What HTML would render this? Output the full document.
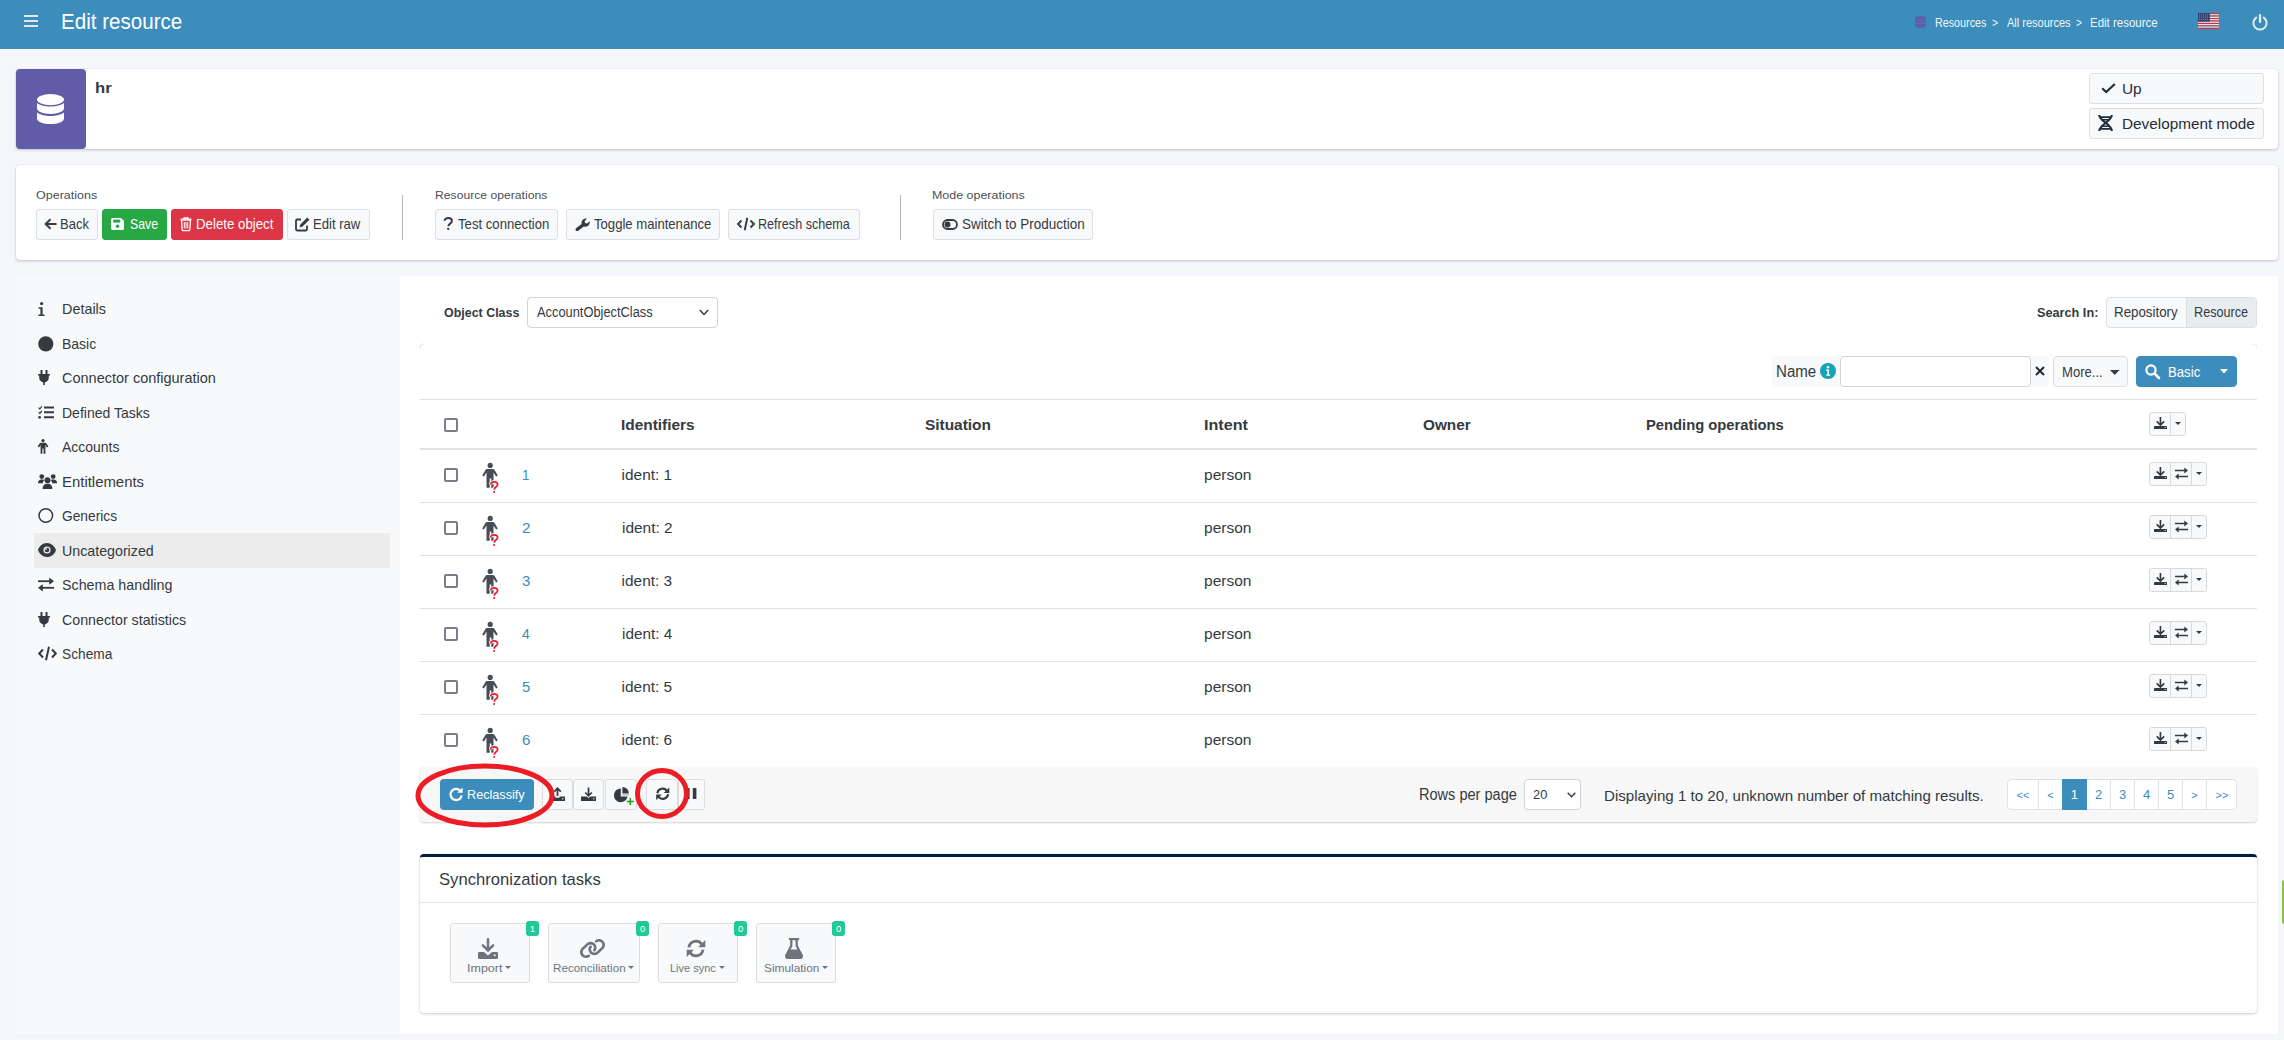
<!DOCTYPE html><html><head><meta charset="utf-8"><title>Edit resource</title><style>
*{box-sizing:border-box}
html,body{margin:0;padding:0}
body{width:2284px;height:1040px;overflow:hidden;position:relative;background:#f4f6f9;font-family:"Liberation Sans",sans-serif}
.t{position:absolute;white-space:nowrap}
.r{position:absolute}
svg.r{overflow:visible}
</style></head><body>
<div class="r" style="left:0px;top:0px;width:2284px;height:49px;background:#3c8dbc"></div>
<div class="r" style="left:24px;top:15px;width:14px;height:2px;background:#dfe9ef"></div>
<div class="r" style="left:24px;top:20px;width:14px;height:2px;background:#dfe9ef"></div>
<div class="r" style="left:24px;top:25px;width:14px;height:2px;background:#dfe9ef"></div>
<div class="t" style="left:61.32px;top:5px;font-size:21.5px;line-height:35px;color:#ffffff;transform:scaleX(0.9573);transform-origin:0 0;">Edit resource</div>
<svg class="r" style="left:1915px;top:16px;" width="11" height="12" viewBox="0 0 11 12" preserveAspectRatio="none"><ellipse cx="5.5" cy="2" rx="5.5" ry="2" fill="#605ca8"/><path d="M0 3.2v2.2c0 1.1 2.5 2 5.5 2s5.5-.9 5.5-2V3.2c-1.2.8-3.2 1.2-5.5 1.2S1.2 4 0 3.2z" fill="#605ca8"/><path d="M0 6.9v2.9c0 1.2 2.5 2.2 5.5 2.2s5.5-1 5.5-2.2V6.9c-1.2.8-3.2 1.2-5.5 1.2S1.2 7.7 0 6.9z" fill="#605ca8"/></svg>
<div class="t" style="left:1935.20px;top:12px;font-size:12.8px;line-height:21px;color:#f2f6f9;transform:scaleX(0.8403);transform-origin:0 0;">Resources</div>
<div class="t" style="left:1991.54px;top:12px;font-size:12.8px;line-height:21px;color:#f2f6f9;transform:scaleX(0.8000);transform-origin:0 0;">&gt;</div>
<div class="t" style="left:2007.04px;top:12px;font-size:12.8px;line-height:21px;color:#f2f6f9;transform:scaleX(0.8601);transform-origin:0 0;">All resources</div>
<div class="t" style="left:2075.54px;top:12px;font-size:12.8px;line-height:21px;color:#f2f6f9;transform:scaleX(0.8000);transform-origin:0 0;">&gt;</div>
<div class="t" style="left:2090.15px;top:12px;font-size:12.8px;line-height:21px;color:#f2f6f9;transform:scaleX(0.8964);transform-origin:0 0;">Edit resource</div>
<svg class="r" style="left:2198px;top:13px;" width="21" height="16" viewBox="0 0 21 16" preserveAspectRatio="none"><rect x="0" y="0.000" width="21" height="1.281" fill="#c8313e"/><rect x="0" y="1.231" width="21" height="1.281" fill="#f0f0f0"/><rect x="0" y="2.462" width="21" height="1.281" fill="#c8313e"/><rect x="0" y="3.692" width="21" height="1.281" fill="#f0f0f0"/><rect x="0" y="4.923" width="21" height="1.281" fill="#c8313e"/><rect x="0" y="6.154" width="21" height="1.281" fill="#f0f0f0"/><rect x="0" y="7.385" width="21" height="1.281" fill="#c8313e"/><rect x="0" y="8.615" width="21" height="1.281" fill="#f0f0f0"/><rect x="0" y="9.846" width="21" height="1.281" fill="#c8313e"/><rect x="0" y="11.077" width="21" height="1.281" fill="#f0f0f0"/><rect x="0" y="12.308" width="21" height="1.281" fill="#c8313e"/><rect x="0" y="13.538" width="21" height="1.281" fill="#f0f0f0"/><rect x="0" y="14.769" width="21" height="1.281" fill="#c8313e"/><rect x="0" y="0" width="11.8" height="8.6" fill="#34406e"/><g fill="#9aa0c8"><rect x="1" y="1.5" width="1" height="0.8"/><rect x="1" y="3.7" width="1" height="0.8"/><rect x="1" y="5.9" width="1" height="0.8"/><rect x="3" y="1.5" width="1" height="0.8"/><rect x="3" y="3.7" width="1" height="0.8"/><rect x="3" y="5.9" width="1" height="0.8"/><rect x="5" y="1.5" width="1" height="0.8"/><rect x="5" y="3.7" width="1" height="0.8"/><rect x="5" y="5.9" width="1" height="0.8"/><rect x="7" y="1.5" width="1" height="0.8"/><rect x="7" y="3.7" width="1" height="0.8"/><rect x="7" y="5.9" width="1" height="0.8"/><rect x="9" y="1.5" width="1" height="0.8"/><rect x="9" y="3.7" width="1" height="0.8"/><rect x="9" y="5.9" width="1" height="0.8"/></g></svg>
<svg class="r" style="left:2252px;top:13.5px;" width="16" height="16.0" viewBox="0 0 16 16" preserveAspectRatio="none"><path d="M4.2 3.6A6.6 6.6 0 1 0 11.8 3.6" fill="none" stroke="#e3eef2" stroke-width="2" stroke-linecap="round"/><rect x="6.9" y="0" width="2.3" height="9" rx="1" fill="#e3eef2"/></svg>
<div class="r" style="left:16px;top:69px;width:2262px;height:80px;background:#fff;border-radius:4px;box-shadow:0 0 1px rgba(0,0,0,.125),0 1px 3px rgba(0,0,0,.2);"></div>
<div class="r" style="left:16px;top:69px;width:70px;height:80px;background:#605ca8;border-radius:4px"></div>
<svg class="r" style="left:37px;top:94px;" width="27" height="30" viewBox="0 0 27 30" preserveAspectRatio="none"><ellipse cx="13.5" cy="5.6" rx="13.5" ry="5.6" fill="#fff"/><path d="M0 9v5.3c0 3.1 6 5.6 13.5 5.6S27 17.4 27 14.3V9c-2.6 2.2-7.7 3.5-13.5 3.5S2.6 11.2 0 9z" fill="#fff"/><path d="M0 18.4v6c0 3.1 6 5.6 13.5 5.6S27 27.5 27 24.4v-6c-2.6 2.2-7.7 3.5-13.5 3.5S2.6 20.6 0 18.4z" fill="#fff"/></svg>
<div class="t" style="left:94.55px;top:76px;font-size:14.5px;line-height:24px;color:#343a40;font-weight:bold;transform:scaleX(1.1547);transform-origin:0 0;">hr</div>
<div class="r" style="left:2089px;top:73px;width:175px;height:31px;background:#f8f9fa;border:1px solid #dcdfe3;border-radius:3px;"></div>
<div class="r" style="left:2089px;top:108px;width:175px;height:31px;background:#f8f9fa;border:1px solid #dcdfe3;border-radius:3px;"></div>
<svg class="r" style="left:2101px;top:83px;" width="15" height="10" viewBox="0 0 15 10" preserveAspectRatio="none"><path d="M1.2 5.2L5.2 9 13.8 1" fill="none" stroke="#1f2d3d" stroke-width="2.2"/></svg>
<div class="t" style="left:2121.88px;top:76px;font-size:15.5px;line-height:25px;color:#1f2d3d;transform:scaleX(0.9931);transform-origin:0 0;">Up</div>
<svg class="r" style="left:2098px;top:115px;" width="15" height="16" viewBox="0 0 15 16" preserveAspectRatio="none"><path d="M1.2 0C1.2 6 13.8 9 13.8 16M13.8 0C13.8 6 1.2 10 1.2 16" fill="none" stroke="#1f2d3d" stroke-width="2.1"/><path d="M1.8 2.1h11.4M3.4 4.7h8.2M3.4 11.3h8.2M1.8 13.9h11.4" stroke="#1f2d3d" stroke-width="1.6"/></svg>
<div class="t" style="left:2121.76px;top:111px;font-size:15.5px;line-height:25px;color:#1f2d3d;transform:scaleX(0.9887);transform-origin:0 0;">Development mode</div>
<div class="r" style="left:16px;top:165px;width:2262px;height:95px;background:#fff;border-radius:4px;box-shadow:0 0 1px rgba(0,0,0,.125),0 1px 3px rgba(0,0,0,.2);"></div>
<div class="t" style="left:35.52px;top:186px;font-size:11.8px;line-height:19px;color:#495057;transform:scaleX(1.0596);transform-origin:0 0;">Operations</div>
<div class="t" style="left:434.52px;top:186px;font-size:11.8px;line-height:19px;color:#495057;transform:scaleX(1.0315);transform-origin:0 0;">Resource operations</div>
<div class="t" style="left:932.00px;top:186px;font-size:11.8px;line-height:19px;color:#495057;transform:scaleX(1.0551);transform-origin:0 0;">Mode operations</div>
<div class="r" style="left:402px;top:195px;width:1px;height:45px;background:#adb5bd"></div>
<div class="r" style="left:900px;top:195px;width:1px;height:45px;background:#adb5bd"></div>
<div class="r" style="left:36px;top:209px;width:62px;height:31px;background:#f8f9fa;border:1px solid #dcdfe3;border-radius:3px;"></div>
<div class="r" style="left:102px;top:209px;width:65px;height:31px;background:#28a745;border:1px solid #28a745;border-radius:3px;"></div>
<div class="r" style="left:171px;top:209px;width:112px;height:31px;background:#dc3545;border:1px solid #dc3545;border-radius:3px;"></div>
<div class="r" style="left:287px;top:209px;width:83px;height:31px;background:#f8f9fa;border:1px solid #dcdfe3;border-radius:3px;"></div>
<div class="r" style="left:435px;top:209px;width:123px;height:31px;background:#f8f9fa;border:1px solid #dcdfe3;border-radius:3px;"></div>
<div class="r" style="left:566px;top:209px;width:154px;height:31px;background:#f8f9fa;border:1px solid #dcdfe3;border-radius:3px;"></div>
<div class="r" style="left:728px;top:209px;width:132px;height:31px;background:#f8f9fa;border:1px solid #dcdfe3;border-radius:3px;"></div>
<div class="r" style="left:933px;top:209px;width:160px;height:31px;background:#f8f9fa;border:1px solid #dcdfe3;border-radius:3px;"></div>
<svg class="r" style="left:44px;top:218px;" width="13" height="12" viewBox="0 0 13 12" preserveAspectRatio="none"><path d="M12.5 6H2M6.5 1.2L1.6 6l4.9 4.8" fill="none" stroke="#343a40" stroke-width="1.9"/></svg>
<div class="t" style="left:59.92px;top:213px;font-size:14.2px;line-height:23px;color:#343a40;transform:scaleX(0.9180);transform-origin:0 0;">Back</div>
<svg class="r" style="left:111px;top:218px;" width="13" height="12" viewBox="0 0 13 12" preserveAspectRatio="none"><path d="M1.5 0h8.5l3 3v7.5c0 .8-.7 1.5-1.5 1.5h-10C.7 12 0 11.3 0 10.5v-9C0 .7.7 0 1.5 0z" fill="#fff"/><rect x="2.2" y="1.6" width="7" height="3" fill="#28a745"/><circle cx="6.5" cy="8.2" r="1.7" fill="#28a745"/></svg>
<div class="t" style="left:130.41px;top:213px;font-size:14.2px;line-height:23px;color:#fff;transform:scaleX(0.8675);transform-origin:0 0;">Save</div>
<svg class="r" style="left:180px;top:217px;" width="12" height="14" viewBox="0 0 12 14" preserveAspectRatio="none"><path d="M0.5 2.2h11M4 2V.8h4V2" fill="none" stroke="#fff" stroke-width="1.3"/><path d="M1.5 3.2h9l-.7 9.5c0 .5-.5 1-1 1H3.2c-.5 0-1-.5-1-1z" fill="none" stroke="#fff" stroke-width="1.3"/><path d="M4.3 5v6.5M6 5v6.5M7.7 5v6.5" stroke="#fff" stroke-width="1"/></svg>
<div class="t" style="left:195.80px;top:213px;font-size:14.2px;line-height:23px;color:#fff;transform:scaleX(0.9344);transform-origin:0 0;">Delete object</div>
<svg class="r" style="left:295px;top:217px;" width="15" height="14" viewBox="0 0 15 14" preserveAspectRatio="none"><path d="M6 2.5H2.2C1.5 2.5 1 3 1 3.7v8.6c0 .7.5 1.2 1.2 1.2h8.6c.7 0 1.2-.5 1.2-1.2V8.5" fill="none" stroke="#343a40" stroke-width="1.8"/><path d="M12.2.6l2.2 2.2-6.8 6.8-3 .8.8-3z" fill="#343a40"/></svg>
<div class="t" style="left:313.12px;top:213px;font-size:14.2px;line-height:23px;color:#343a40;transform:scaleX(0.9231);transform-origin:0 0;">Edit raw</div>
<svg class="r" style="left:443px;top:217px;" width="11" height="13" viewBox="0 0 11 13" preserveAspectRatio="none"><path d="M1.6 3.8C1.6 2 3.3 1 5.3 1c2.1 0 3.6 1.2 3.6 3 0 1.5-1 2.2-2 2.9-.9.6-1.5 1.1-1.5 2.4" fill="none" stroke="#343a40" stroke-width="1.9"/><rect x="4.2" y="10.9" width="2" height="2" fill="#343a40"/></svg>
<div class="t" style="left:457.92px;top:213px;font-size:14.2px;line-height:23px;color:#343a40;transform:scaleX(0.9269);transform-origin:0 0;">Test connection</div>
<svg class="r" style="left:575px;top:218px;" width="15" height="13" viewBox="0 0 15 13" preserveAspectRatio="none"><path d="M14.6 3.2c.4 1.5 0 3.1-1.2 4.2-1.3 1.2-3 1.5-4.6 1L3.3 12.7c-.7.6-1.8.5-2.4-.2-.6-.7-.5-1.7.2-2.3L6.6 6c-.4-1.5 0-3.2 1.2-4.3C9 .6 10.6.3 12 .7L9.6 2.9l.4 2 2 .5z" fill="#343a40"/></svg>
<div class="t" style="left:593.92px;top:213px;font-size:14.2px;line-height:23px;color:#343a40;transform:scaleX(0.9240);transform-origin:0 0;">Toggle maintenance</div>
<svg class="r" style="left:737px;top:217px;" width="18" height="14" viewBox="0 0 18 14" preserveAspectRatio="none"><path d="M4.5 3.5L1 7l3.5 3.5M13.5 3.5L17 7l-3.5 3.5M10.3 .8L7.7 13.2" fill="none" stroke="#343a40" stroke-width="1.9"/></svg>
<div class="t" style="left:758.36px;top:213px;font-size:14.2px;line-height:23px;color:#343a40;transform:scaleX(0.8887);transform-origin:0 0;">Refresh schema</div>
<svg class="r" style="left:942px;top:219px;" width="16" height="11" viewBox="0 0 16 11" preserveAspectRatio="none"><rect x="1" y="1" width="14" height="9" rx="4.5" fill="none" stroke="#343a40" stroke-width="1.8"/><circle cx="5.5" cy="5.5" r="3" fill="#343a40"/></svg>
<div class="t" style="left:961.76px;top:213px;font-size:14.2px;line-height:23px;color:#343a40;transform:scaleX(0.9481);transform-origin:0 0;">Switch to Production</div>
<div class="r" style="left:16px;top:276px;width:384px;height:758px;background:#f8f9fa"></div>
<div class="r" style="left:34px;top:533px;width:356px;height:35px;background:#ececec"></div>
<div class="t" style="left:61.63px;top:297px;font-size:14.8px;line-height:24px;color:#343a40;transform:scaleX(0.9729);transform-origin:0 0;">Details</div>
<div class="t" style="left:61.67px;top:332px;font-size:14.8px;line-height:24px;color:#343a40;transform:scaleX(0.9449);transform-origin:0 0;">Basic</div>
<div class="t" style="left:62.11px;top:366px;font-size:14.8px;line-height:24px;color:#343a40;transform:scaleX(0.9794);transform-origin:0 0;">Connector configuration</div>
<div class="t" style="left:61.66px;top:401px;font-size:14.8px;line-height:24px;color:#343a40;transform:scaleX(0.9468);transform-origin:0 0;">Defined Tasks</div>
<div class="t" style="left:62.25px;top:435px;font-size:14.8px;line-height:24px;color:#343a40;transform:scaleX(0.9427);transform-origin:0 0;">Accounts</div>
<div class="t" style="left:61.59px;top:470px;font-size:14.8px;line-height:24px;color:#343a40;transform:scaleX(1.0075);transform-origin:0 0;">Entitlements</div>
<div class="t" style="left:62.15px;top:504px;font-size:14.8px;line-height:24px;color:#343a40;transform:scaleX(0.9296);transform-origin:0 0;">Generics</div>
<div class="t" style="left:61.77px;top:539px;font-size:14.8px;line-height:24px;color:#343a40;transform:scaleX(0.9611);transform-origin:0 0;">Uncategorized</div>
<div class="t" style="left:62.24px;top:573px;font-size:14.8px;line-height:24px;color:#343a40;transform:scaleX(0.9653);transform-origin:0 0;">Schema handling</div>
<div class="t" style="left:62.13px;top:608px;font-size:14.8px;line-height:24px;color:#343a40;transform:scaleX(0.9616);transform-origin:0 0;">Connector statistics</div>
<div class="t" style="left:62.27px;top:642px;font-size:14.8px;line-height:24px;color:#343a40;transform:scaleX(0.9268);transform-origin:0 0;">Schema</div>
<svg class="r" style="left:38px;top:302px;" width="7" height="14" viewBox="0 0 7 14" preserveAspectRatio="none"><circle cx="3.6" cy="1.6" r="1.6" fill="#343a40"/><path d="M0.6 5.2h4v7.3h2v1.5H0.4v-1.5h2V6.7H0.6z" fill="#343a40"/></svg>
<svg class="r" style="left:38px;top:336px;" width="16" height="16" viewBox="0 0 16 16" preserveAspectRatio="none"><circle cx="7.8" cy="7.8" r="7.6" fill="#343a40"/></svg>
<svg class="r" style="left:38px;top:370px;" width="12" height="15" viewBox="0 0 12 15" preserveAspectRatio="none"><path d="M2.5 0h2v4h-2zM7.5 0h2v4h-2z" fill="#343a40"/><path d="M0 4h12v1.6h-1.2v2.2c0 2.4-1.8 4.3-4 4.6V15h-1.6v-2.6c-2.2-.3-4-2.2-4-4.6V5.6H0z" fill="#343a40"/></svg>
<svg class="r" style="left:38px;top:406px;" width="16" height="13" viewBox="0 0 16 13" preserveAspectRatio="none"><path d="M.6 1.6l1.2 1.2L4 .4M.6 6.2l1.2 1.2L4 5" fill="none" stroke="#343a40" stroke-width="1.2"/><circle cx="1.6" cy="11.3" r="1.4" fill="#343a40"/><path d="M6 1.5h10M6 6.3h10M6 11.2h10" stroke="#343a40" stroke-width="1.9"/></svg>
<svg class="r" style="left:38px;top:439px;" width="10" height="15" viewBox="0 0 10 15" preserveAspectRatio="none"><circle cx="5" cy="1.6" r="1.6" fill="#343a40"/><path d="M2.8 3.8h4.4c.5 0 .9.2 1.2.6l2 3.2-1.4.9-1.6-2.4v8.7H5.6V9.6h-1.2v5.2H2.6V6.1L1 8.5l-1.4-.9 2-3.2c.3-.4.7-.6 1.2-.6z" fill="#343a40"/></svg>
<svg class="r" style="left:38px;top:474px;" width="19" height="15" viewBox="0 0 19 15" preserveAspectRatio="none"><circle cx="3.8" cy="2.6" r="2.4" fill="#343a40"/><circle cx="15.2" cy="2.6" r="2.4" fill="#343a40"/><path d="M0 8.6c0-1.8 1.4-3.2 3.2-3.2h1.6c.6 0 1.1.2 1.5.5-.9.8-1.4 1.9-1.4 3.1v.2H0z" fill="#343a40"/><path d="M19 8.6c0-1.8-1.4-3.2-3.2-3.2h-1.6c-.6 0-1.1.2-1.5.5.9.8 1.4 1.9 1.4 3.1v.2H19z" fill="#343a40"/><circle cx="9.5" cy="6.2" r="3" fill="#343a40"/><path d="M4.6 15c0-3 1.8-5.2 4-5.2h1.8c2.2 0 4 2.2 4 5.2z" fill="#343a40"/></svg>
<svg class="r" style="left:38px;top:508px;" width="16" height="15" viewBox="0 0 16 15" preserveAspectRatio="none"><circle cx="7.8" cy="7.5" r="6.8" fill="none" stroke="#343a40" stroke-width="1.5"/></svg>
<svg class="r" style="left:38px;top:543px;" width="18" height="14" viewBox="0 0 18 14" preserveAspectRatio="none"><path d="M9 0C4.8 0 1.6 3 .2 6.3c-.2.4-.2.9 0 1.3C1.6 11 4.8 14 9 14s7.4-3 8.8-6.3c.2-.4.2-.9 0-1.3C16.4 3 13.2 0 9 0z" fill="#343a40"/><circle cx="9" cy="7" r="3.6" fill="#ececec"/><circle cx="9" cy="7" r="2.3" fill="#343a40"/><circle cx="8" cy="6" r="0.9" fill="#ececec"/></svg>
<svg class="r" style="left:38px;top:577px;" width="16" height="15" viewBox="0 0 15 15" preserveAspectRatio="none"><path d="M0 4.2h12" stroke="#343a40" stroke-width="1.8"/><path d="M10.5 0.6L15 4.2l-4.5 3.6z" fill="#343a40"/><path d="M15 10.8H3" stroke="#343a40" stroke-width="1.8"/><path d="M4.5 7.2L0 10.8l4.5 3.6z" fill="#343a40"/></svg>
<svg class="r" style="left:38px;top:612px;" width="12" height="15" viewBox="0 0 12 15" preserveAspectRatio="none"><path d="M2.5 0h2v4h-2zM7.5 0h2v4h-2z" fill="#343a40"/><path d="M0 4h12v1.6h-1.2v2.2c0 2.4-1.8 4.3-4 4.6V15h-1.6v-2.6c-2.2-.3-4-2.2-4-4.6V5.6H0z" fill="#343a40"/></svg>
<svg class="r" style="left:38px;top:646px;" width="19" height="15" viewBox="0 0 19 15" preserveAspectRatio="none"><path d="M5 3.5L1.2 7.5 5 11.5M14 3.5l3.8 4L14 11.5M11 .8L8 14.2" fill="none" stroke="#343a40" stroke-width="2"/></svg>
<div class="r" style="left:400px;top:276px;width:1878px;height:758px;background:#fff"></div>
<div class="t" style="left:443.92px;top:302px;font-size:13.6px;line-height:22px;color:#343a40;font-weight:bold;transform:scaleX(0.9153);transform-origin:0 0;">Object Class</div>
<div class="r" style="left:527px;top:297px;width:191px;height:31px;background:#fff;border:1px solid #ced4da;border-radius:4px"></div>
<div class="t" style="left:536.70px;top:301px;font-size:14px;line-height:23px;color:#343a40;transform:scaleX(0.9178);transform-origin:0 0;">AccountObjectClass</div>
<svg class="r" style="left:699px;top:309px;" width="10" height="7" viewBox="0 0 10 7" preserveAspectRatio="none"><path d="M.8 .9L5 5.4 9.2 .9" fill="none" stroke="#343a40" stroke-width="1.5"/></svg>
<div class="t" style="left:2036.63px;top:302px;font-size:13.6px;line-height:22px;color:#343a40;font-weight:bold;transform:scaleX(0.9339);transform-origin:0 0;">Search In:</div>
<div class="r" style="left:2106px;top:297px;width:151px;height:31px;background:#f8f9fa;border:1px solid #dcdfe3;border-radius:4px"></div>
<div class="r" style="left:2186px;top:298px;width:70px;height:29px;background:#e9ecef;border-left:1px solid #dcdfe3;border-radius:0 3px 3px 0"></div>
<div class="t" style="left:2113.93px;top:301px;font-size:14px;line-height:23px;color:#343a40;transform:scaleX(0.9521);transform-origin:0 0;">Repository</div>
<div class="t" style="left:2194.48px;top:301px;font-size:14px;line-height:23px;color:#343a40;transform:scaleX(0.9032);transform-origin:0 0;">Resource</div>
<svg class="r" style="left:419px;top:343px;" width="6" height="6" viewBox="0 0 6 6" preserveAspectRatio="none"><path d="M1 5.5V4.5C1 2.5 2.5 1 4.5 1h1" fill="none" stroke="#e6e6e6" stroke-width="1.2"/></svg>
<svg class="r" style="left:2252px;top:343px;" width="6" height="6" viewBox="0 0 6 6" preserveAspectRatio="none"><path d="M5 5.5V4.5C5 2.5 3.5 1 1.5 1H.5" fill="none" stroke="#eeeeee" stroke-width="1.2"/></svg>
<div class="r" style="left:1772px;top:356px;width:277px;height:31px;background:#f8f9fa;border-radius:4px"></div>
<div class="t" style="left:1775.55px;top:359px;font-size:15.8px;line-height:26px;color:#343a40;transform:scaleX(0.9545);transform-origin:0 0;">Name</div>
<svg class="r" style="left:1820px;top:363px;" width="16" height="16" viewBox="0 0 16 16" preserveAspectRatio="none"><circle cx="8" cy="8" r="8" fill="#17a2b8"/><circle cx="8" cy="4.3" r="1.3" fill="#fff"/><path d="M6.3 6.6h2.6v4.8h1.2v1.3H6.2v-1.3h1.2V7.9H6.3z" fill="#fff"/></svg>
<div class="r" style="left:1840px;top:356px;width:191px;height:31px;background:#fff;border:1px solid #ced4da;border-radius:4px"></div>
<svg class="r" style="left:2035px;top:366px;" width="10" height="10" viewBox="0 0 10 10" preserveAspectRatio="none"><path d="M1 1l8 8M9 1L1 9" stroke="#212529" stroke-width="1.9"/></svg>
<div class="r" style="left:2053px;top:356px;width:75px;height:31px;background:#f8f9fa;border:1px solid #dcdfe3;border-radius:4px"></div>
<div class="t" style="left:2061.95px;top:361px;font-size:14px;line-height:23px;color:#343a40;transform:scaleX(0.9337);transform-origin:0 0;">More...</div>
<svg class="r" style="left:2110px;top:370px;" width="10" height="5" viewBox="0 0 10 5" preserveAspectRatio="none"><path d="M0 0h9.5L4.75 5z" fill="#343a40"/></svg>
<div class="r" style="left:2136px;top:356px;width:101px;height:31px;background:#3c8dbc;border:1px solid #3c8dbc;border-radius:4px"></div>
<svg class="r" style="left:2145px;top:364px;" width="15" height="15" viewBox="0 0 15 15" preserveAspectRatio="none"><circle cx="6" cy="6" r="4.6" fill="none" stroke="#fff" stroke-width="2.2"/><path d="M9.4 9.4L14 14" stroke="#fff" stroke-width="2.6" stroke-linecap="round"/></svg>
<div class="t" style="left:2168.19px;top:360px;font-size:14.4px;line-height:24px;color:#fff;transform:scaleX(0.9160);transform-origin:0 0;">Basic</div>
<svg class="r" style="left:2220px;top:369px;" width="8" height="5" viewBox="0 0 8 5" preserveAspectRatio="none"><path d="M0 0h8L4 4.5z" fill="#fff"/></svg>
<div class="r" style="left:420px;top:399px;width:1837px;height:1px;background:#dee2e6"></div>
<div class="r" style="left:420px;top:448px;width:1837px;height:2px;background:#dee2e6"></div>
<div class="r" style="left:420px;top:502px;width:1837px;height:1px;background:#dee2e6"></div>
<div class="r" style="left:420px;top:555px;width:1837px;height:1px;background:#dee2e6"></div>
<div class="r" style="left:420px;top:608px;width:1837px;height:1px;background:#dee2e6"></div>
<div class="r" style="left:420px;top:661px;width:1837px;height:1px;background:#dee2e6"></div>
<div class="r" style="left:420px;top:714px;width:1837px;height:1px;background:#dee2e6"></div>
<div class="r" style="left:444px;top:418px;width:14px;height:14px;border:2px solid #7d7b8c;border-radius:2px;background:#fff"></div>
<div class="t" style="left:621.33px;top:412px;font-size:15.2px;line-height:25px;color:#343a40;font-weight:bold;transform:scaleX(1.0147);transform-origin:0 0;">Identifiers</div>
<div class="t" style="left:925.44px;top:412px;font-size:15.2px;line-height:25px;color:#343a40;font-weight:bold;transform:scaleX(1.0149);transform-origin:0 0;">Situation</div>
<div class="t" style="left:1203.88px;top:412px;font-size:15.2px;line-height:25px;color:#343a40;font-weight:bold;transform:scaleX(1.0634);transform-origin:0 0;">Intent</div>
<div class="t" style="left:1423.32px;top:412px;font-size:15.2px;line-height:25px;color:#343a40;font-weight:bold;transform:scaleX(1.0080);transform-origin:0 0;">Owner</div>
<div class="t" style="left:1645.98px;top:412px;font-size:15.2px;line-height:25px;color:#343a40;font-weight:bold;transform:scaleX(0.9714);transform-origin:0 0;">Pending operations</div>
<div class="r" style="left:2149px;top:412px;width:37px;height:24px;background:#f8f9fa;border:1px solid #d9d9d9;border-radius:3px"></div>
<div class="r" style="left:2170px;top:412px;width:1px;height:24px;background:#d9d9d9"></div>
<svg class="r" style="left:2154px;top:417px;" width="13" height="12" viewBox="0 0 12.5 12" preserveAspectRatio="none"><path d="M6.2 0v7.6M2.6 4.4l3.6 3.6 3.6-3.6" fill="none" stroke="#343a40" stroke-width="1.6"/><rect x="0" y="9" width="12.5" height="3" rx=".5" fill="#343a40"/><circle cx="10.8" cy="10.5" r=".6" fill="#f8f9fa"/></svg>
<svg class="r" style="left:2175px;top:422px;" width="6" height="3" viewBox="0 0 5.6 2.8" preserveAspectRatio="none"><path d="M0 0h5.6L2.8 2.8z" fill="#343a40"/></svg>
<div class="r" style="left:444px;top:468px;width:14px;height:14px;border:2px solid #7d7b8c;border-radius:2px;background:#fff"></div>
<svg class="r" style="left:482px;top:462px;" width="16" height="26" viewBox="0 0 16 26" preserveAspectRatio="none"><circle cx="8.2" cy="3.4" r="2.6" fill="#474d54"/><path d="M5.5 7h5.4c.6 0 1.2.3 1.5.8l3.4 5.6-1.7 1.1-2.6-4v15.3H9.3V16.5H7.7v9.3H4.5V10.5l-2.6 4-1.7-1.1 3.4-5.6c.3-.5.9-.8 1.5-.8z" fill="#474d54"/></svg>
<svg class="r" style="left:489px;top:481px;" width="10" height="12" viewBox="0 0 10 12" preserveAspectRatio="none"><path d="M1.6 3.4C1.6 1.7 3.3.9 5.1.9c2 0 3.5 1 3.5 2.6 0 1.4-1 2.1-2 2.8-.9.6-1.3 1.2-1.3 2.4" fill="none" stroke="#fff" stroke-width="3.4"/><rect x="3.6" y="9.4" width="2.8" height="3" fill="#fff"/><path d="M1.6 3.4C1.6 1.7 3.3.9 5.1.9c2 0 3.5 1 3.5 2.6 0 1.4-1 2.1-2 2.8-.9.6-1.3 1.2-1.3 2.4" fill="none" stroke="#e41e2b" stroke-width="1.8"/><rect x="4.3" y="10.1" width="1.7" height="1.8" fill="#e41e2b"/></svg>
<div class="t" style="left:522.15px;top:462px;font-size:15.4px;line-height:25px;color:#3c8dbc;transform:scaleX(0.8593);transform-origin:0 0;">1</div>
<div class="t" style="left:621.62px;top:462px;font-size:15.4px;line-height:25px;color:#343a40;">ident: 1</div>
<div class="t" style="left:1204.02px;top:462px;font-size:15.4px;line-height:25px;color:#343a40;transform:scaleX(1.0083);transform-origin:0 0;">person</div>
<div class="r" style="left:2149px;top:462px;width:58px;height:24px;background:#f8f9fa;border:1px solid #d9d9d9;border-radius:3px"></div>
<div class="r" style="left:2170px;top:462px;width:1px;height:24px;background:#d9d9d9"></div>
<div class="r" style="left:2191px;top:462px;width:1px;height:24px;background:#d9d9d9"></div>
<svg class="r" style="left:2154px;top:467px;" width="13" height="12" viewBox="0 0 12.5 12" preserveAspectRatio="none"><path d="M6.2 0v7.6M2.6 4.4l3.6 3.6 3.6-3.6" fill="none" stroke="#343a40" stroke-width="1.6"/><rect x="0" y="9" width="12.5" height="3" rx=".5" fill="#343a40"/><circle cx="10.8" cy="10.5" r=".6" fill="#f8f9fa"/></svg>
<svg class="r" style="left:2175px;top:467px;" width="13" height="13" viewBox="0 0 13 13" preserveAspectRatio="none"><path d="M0 3.5h10.5" stroke="#343a40" stroke-width="1.5"/><path d="M9.3 0.4L13 3.5 9.3 6.6z" fill="#343a40"/><path d="M13 9.5H2.5" stroke="#343a40" stroke-width="1.5"/><path d="M3.7 6.4L0 9.5l3.7 3.1z" fill="#343a40"/></svg>
<svg class="r" style="left:2196px;top:472px;" width="6" height="3" viewBox="0 0 5.6 2.8" preserveAspectRatio="none"><path d="M0 0h5.6L2.8 2.8z" fill="#343a40"/></svg>
<div class="r" style="left:444px;top:521px;width:14px;height:14px;border:2px solid #7d7b8c;border-radius:2px;background:#fff"></div>
<svg class="r" style="left:482px;top:515px;" width="16" height="26" viewBox="0 0 16 26" preserveAspectRatio="none"><circle cx="8.2" cy="3.4" r="2.6" fill="#474d54"/><path d="M5.5 7h5.4c.6 0 1.2.3 1.5.8l3.4 5.6-1.7 1.1-2.6-4v15.3H9.3V16.5H7.7v9.3H4.5V10.5l-2.6 4-1.7-1.1 3.4-5.6c.3-.5.9-.8 1.5-.8z" fill="#474d54"/></svg>
<svg class="r" style="left:489px;top:534px;" width="10" height="12" viewBox="0 0 10 12" preserveAspectRatio="none"><path d="M1.6 3.4C1.6 1.7 3.3.9 5.1.9c2 0 3.5 1 3.5 2.6 0 1.4-1 2.1-2 2.8-.9.6-1.3 1.2-1.3 2.4" fill="none" stroke="#fff" stroke-width="3.4"/><rect x="3.6" y="9.4" width="2.8" height="3" fill="#fff"/><path d="M1.6 3.4C1.6 1.7 3.3.9 5.1.9c2 0 3.5 1 3.5 2.6 0 1.4-1 2.1-2 2.8-.9.6-1.3 1.2-1.3 2.4" fill="none" stroke="#e41e2b" stroke-width="1.8"/><rect x="4.3" y="10.1" width="1.7" height="1.8" fill="#e41e2b"/></svg>
<div class="t" style="left:521.98px;top:515px;font-size:15.4px;line-height:25px;color:#3c8dbc;">2</div>
<div class="t" style="left:621.62px;top:515px;font-size:15.4px;line-height:25px;color:#343a40;transform:scaleX(1.0036);transform-origin:0 0;">ident: 2</div>
<div class="t" style="left:1204.02px;top:515px;font-size:15.4px;line-height:25px;color:#343a40;transform:scaleX(1.0083);transform-origin:0 0;">person</div>
<div class="r" style="left:2149px;top:515px;width:58px;height:24px;background:#f8f9fa;border:1px solid #d9d9d9;border-radius:3px"></div>
<div class="r" style="left:2170px;top:515px;width:1px;height:24px;background:#d9d9d9"></div>
<div class="r" style="left:2191px;top:515px;width:1px;height:24px;background:#d9d9d9"></div>
<svg class="r" style="left:2154px;top:520px;" width="13" height="12" viewBox="0 0 12.5 12" preserveAspectRatio="none"><path d="M6.2 0v7.6M2.6 4.4l3.6 3.6 3.6-3.6" fill="none" stroke="#343a40" stroke-width="1.6"/><rect x="0" y="9" width="12.5" height="3" rx=".5" fill="#343a40"/><circle cx="10.8" cy="10.5" r=".6" fill="#f8f9fa"/></svg>
<svg class="r" style="left:2175px;top:520px;" width="13" height="13" viewBox="0 0 13 13" preserveAspectRatio="none"><path d="M0 3.5h10.5" stroke="#343a40" stroke-width="1.5"/><path d="M9.3 0.4L13 3.5 9.3 6.6z" fill="#343a40"/><path d="M13 9.5H2.5" stroke="#343a40" stroke-width="1.5"/><path d="M3.7 6.4L0 9.5l3.7 3.1z" fill="#343a40"/></svg>
<svg class="r" style="left:2196px;top:525px;" width="6" height="3" viewBox="0 0 5.6 2.8" preserveAspectRatio="none"><path d="M0 0h5.6L2.8 2.8z" fill="#343a40"/></svg>
<div class="r" style="left:444px;top:574px;width:14px;height:14px;border:2px solid #7d7b8c;border-radius:2px;background:#fff"></div>
<svg class="r" style="left:482px;top:568px;" width="16" height="26" viewBox="0 0 16 26" preserveAspectRatio="none"><circle cx="8.2" cy="3.4" r="2.6" fill="#474d54"/><path d="M5.5 7h5.4c.6 0 1.2.3 1.5.8l3.4 5.6-1.7 1.1-2.6-4v15.3H9.3V16.5H7.7v9.3H4.5V10.5l-2.6 4-1.7-1.1 3.4-5.6c.3-.5.9-.8 1.5-.8z" fill="#474d54"/></svg>
<svg class="r" style="left:489px;top:587px;" width="10" height="12" viewBox="0 0 10 12" preserveAspectRatio="none"><path d="M1.6 3.4C1.6 1.7 3.3.9 5.1.9c2 0 3.5 1 3.5 2.6 0 1.4-1 2.1-2 2.8-.9.6-1.3 1.2-1.3 2.4" fill="none" stroke="#fff" stroke-width="3.4"/><rect x="3.6" y="9.4" width="2.8" height="3" fill="#fff"/><path d="M1.6 3.4C1.6 1.7 3.3.9 5.1.9c2 0 3.5 1 3.5 2.6 0 1.4-1 2.1-2 2.8-.9.6-1.3 1.2-1.3 2.4" fill="none" stroke="#e41e2b" stroke-width="1.8"/><rect x="4.3" y="10.1" width="1.7" height="1.8" fill="#e41e2b"/></svg>
<div class="t" style="left:522.12px;top:568px;font-size:15.4px;line-height:25px;color:#3c8dbc;transform:scaleX(0.9655);transform-origin:0 0;">3</div>
<div class="t" style="left:621.62px;top:568px;font-size:15.4px;line-height:25px;color:#343a40;">ident: 3</div>
<div class="t" style="left:1204.02px;top:568px;font-size:15.4px;line-height:25px;color:#343a40;transform:scaleX(1.0083);transform-origin:0 0;">person</div>
<div class="r" style="left:2149px;top:568px;width:58px;height:24px;background:#f8f9fa;border:1px solid #d9d9d9;border-radius:3px"></div>
<div class="r" style="left:2170px;top:568px;width:1px;height:24px;background:#d9d9d9"></div>
<div class="r" style="left:2191px;top:568px;width:1px;height:24px;background:#d9d9d9"></div>
<svg class="r" style="left:2154px;top:573px;" width="13" height="12" viewBox="0 0 12.5 12" preserveAspectRatio="none"><path d="M6.2 0v7.6M2.6 4.4l3.6 3.6 3.6-3.6" fill="none" stroke="#343a40" stroke-width="1.6"/><rect x="0" y="9" width="12.5" height="3" rx=".5" fill="#343a40"/><circle cx="10.8" cy="10.5" r=".6" fill="#f8f9fa"/></svg>
<svg class="r" style="left:2175px;top:573px;" width="13" height="13" viewBox="0 0 13 13" preserveAspectRatio="none"><path d="M0 3.5h10.5" stroke="#343a40" stroke-width="1.5"/><path d="M9.3 0.4L13 3.5 9.3 6.6z" fill="#343a40"/><path d="M13 9.5H2.5" stroke="#343a40" stroke-width="1.5"/><path d="M3.7 6.4L0 9.5l3.7 3.1z" fill="#343a40"/></svg>
<svg class="r" style="left:2196px;top:578px;" width="6" height="3" viewBox="0 0 5.6 2.8" preserveAspectRatio="none"><path d="M0 0h5.6L2.8 2.8z" fill="#343a40"/></svg>
<div class="r" style="left:444px;top:627px;width:14px;height:14px;border:2px solid #7d7b8c;border-radius:2px;background:#fff"></div>
<svg class="r" style="left:482px;top:621px;" width="16" height="26" viewBox="0 0 16 26" preserveAspectRatio="none"><circle cx="8.2" cy="3.4" r="2.6" fill="#474d54"/><path d="M5.5 7h5.4c.6 0 1.2.3 1.5.8l3.4 5.6-1.7 1.1-2.6-4v15.3H9.3V16.5H7.7v9.3H4.5V10.5l-2.6 4-1.7-1.1 3.4-5.6c.3-.5.9-.8 1.5-.8z" fill="#474d54"/></svg>
<svg class="r" style="left:489px;top:640px;" width="10" height="12" viewBox="0 0 10 12" preserveAspectRatio="none"><path d="M1.6 3.4C1.6 1.7 3.3.9 5.1.9c2 0 3.5 1 3.5 2.6 0 1.4-1 2.1-2 2.8-.9.6-1.3 1.2-1.3 2.4" fill="none" stroke="#fff" stroke-width="3.4"/><rect x="3.6" y="9.4" width="2.8" height="3" fill="#fff"/><path d="M1.6 3.4C1.6 1.7 3.3.9 5.1.9c2 0 3.5 1 3.5 2.6 0 1.4-1 2.1-2 2.8-.9.6-1.3 1.2-1.3 2.4" fill="none" stroke="#e41e2b" stroke-width="1.8"/><rect x="4.3" y="10.1" width="1.7" height="1.8" fill="#e41e2b"/></svg>
<div class="t" style="left:522.38px;top:621px;font-size:15.4px;line-height:25px;color:#3c8dbc;transform:scaleX(0.9032);transform-origin:0 0;">4</div>
<div class="t" style="left:621.63px;top:621px;font-size:15.4px;line-height:25px;color:#343a40;transform:scaleX(0.9959);transform-origin:0 0;">ident: 4</div>
<div class="t" style="left:1204.02px;top:621px;font-size:15.4px;line-height:25px;color:#343a40;transform:scaleX(1.0083);transform-origin:0 0;">person</div>
<div class="r" style="left:2149px;top:621px;width:58px;height:24px;background:#f8f9fa;border:1px solid #d9d9d9;border-radius:3px"></div>
<div class="r" style="left:2170px;top:621px;width:1px;height:24px;background:#d9d9d9"></div>
<div class="r" style="left:2191px;top:621px;width:1px;height:24px;background:#d9d9d9"></div>
<svg class="r" style="left:2154px;top:626px;" width="13" height="12" viewBox="0 0 12.5 12" preserveAspectRatio="none"><path d="M6.2 0v7.6M2.6 4.4l3.6 3.6 3.6-3.6" fill="none" stroke="#343a40" stroke-width="1.6"/><rect x="0" y="9" width="12.5" height="3" rx=".5" fill="#343a40"/><circle cx="10.8" cy="10.5" r=".6" fill="#f8f9fa"/></svg>
<svg class="r" style="left:2175px;top:626px;" width="13" height="13" viewBox="0 0 13 13" preserveAspectRatio="none"><path d="M0 3.5h10.5" stroke="#343a40" stroke-width="1.5"/><path d="M9.3 0.4L13 3.5 9.3 6.6z" fill="#343a40"/><path d="M13 9.5H2.5" stroke="#343a40" stroke-width="1.5"/><path d="M3.7 6.4L0 9.5l3.7 3.1z" fill="#343a40"/></svg>
<svg class="r" style="left:2196px;top:631px;" width="6" height="3" viewBox="0 0 5.6 2.8" preserveAspectRatio="none"><path d="M0 0h5.6L2.8 2.8z" fill="#343a40"/></svg>
<div class="r" style="left:444px;top:680px;width:14px;height:14px;border:2px solid #7d7b8c;border-radius:2px;background:#fff"></div>
<svg class="r" style="left:482px;top:674px;" width="16" height="26" viewBox="0 0 16 26" preserveAspectRatio="none"><circle cx="8.2" cy="3.4" r="2.6" fill="#474d54"/><path d="M5.5 7h5.4c.6 0 1.2.3 1.5.8l3.4 5.6-1.7 1.1-2.6-4v15.3H9.3V16.5H7.7v9.3H4.5V10.5l-2.6 4-1.7-1.1 3.4-5.6c.3-.5.9-.8 1.5-.8z" fill="#474d54"/></svg>
<svg class="r" style="left:489px;top:693px;" width="10" height="12" viewBox="0 0 10 12" preserveAspectRatio="none"><path d="M1.6 3.4C1.6 1.7 3.3.9 5.1.9c2 0 3.5 1 3.5 2.6 0 1.4-1 2.1-2 2.8-.9.6-1.3 1.2-1.3 2.4" fill="none" stroke="#fff" stroke-width="3.4"/><rect x="3.6" y="9.4" width="2.8" height="3" fill="#fff"/><path d="M1.6 3.4C1.6 1.7 3.3.9 5.1.9c2 0 3.5 1 3.5 2.6 0 1.4-1 2.1-2 2.8-.9.6-1.3 1.2-1.3 2.4" fill="none" stroke="#e41e2b" stroke-width="1.8"/><rect x="4.3" y="10.1" width="1.7" height="1.8" fill="#e41e2b"/></svg>
<div class="t" style="left:522.12px;top:674px;font-size:15.4px;line-height:25px;color:#3c8dbc;transform:scaleX(0.9655);transform-origin:0 0;">5</div>
<div class="t" style="left:621.62px;top:674px;font-size:15.4px;line-height:25px;color:#343a40;">ident: 5</div>
<div class="t" style="left:1204.02px;top:674px;font-size:15.4px;line-height:25px;color:#343a40;transform:scaleX(1.0083);transform-origin:0 0;">person</div>
<div class="r" style="left:2149px;top:674px;width:58px;height:24px;background:#f8f9fa;border:1px solid #d9d9d9;border-radius:3px"></div>
<div class="r" style="left:2170px;top:674px;width:1px;height:24px;background:#d9d9d9"></div>
<div class="r" style="left:2191px;top:674px;width:1px;height:24px;background:#d9d9d9"></div>
<svg class="r" style="left:2154px;top:679px;" width="13" height="12" viewBox="0 0 12.5 12" preserveAspectRatio="none"><path d="M6.2 0v7.6M2.6 4.4l3.6 3.6 3.6-3.6" fill="none" stroke="#343a40" stroke-width="1.6"/><rect x="0" y="9" width="12.5" height="3" rx=".5" fill="#343a40"/><circle cx="10.8" cy="10.5" r=".6" fill="#f8f9fa"/></svg>
<svg class="r" style="left:2175px;top:679px;" width="13" height="13" viewBox="0 0 13 13" preserveAspectRatio="none"><path d="M0 3.5h10.5" stroke="#343a40" stroke-width="1.5"/><path d="M9.3 0.4L13 3.5 9.3 6.6z" fill="#343a40"/><path d="M13 9.5H2.5" stroke="#343a40" stroke-width="1.5"/><path d="M3.7 6.4L0 9.5l3.7 3.1z" fill="#343a40"/></svg>
<svg class="r" style="left:2196px;top:684px;" width="6" height="3" viewBox="0 0 5.6 2.8" preserveAspectRatio="none"><path d="M0 0h5.6L2.8 2.8z" fill="#343a40"/></svg>
<div class="r" style="left:444px;top:733px;width:14px;height:14px;border:2px solid #7d7b8c;border-radius:2px;background:#fff"></div>
<svg class="r" style="left:482px;top:727px;" width="16" height="26" viewBox="0 0 16 26" preserveAspectRatio="none"><circle cx="8.2" cy="3.4" r="2.6" fill="#474d54"/><path d="M5.5 7h5.4c.6 0 1.2.3 1.5.8l3.4 5.6-1.7 1.1-2.6-4v15.3H9.3V16.5H7.7v9.3H4.5V10.5l-2.6 4-1.7-1.1 3.4-5.6c.3-.5.9-.8 1.5-.8z" fill="#474d54"/></svg>
<svg class="r" style="left:489px;top:746px;" width="10" height="12" viewBox="0 0 10 12" preserveAspectRatio="none"><path d="M1.6 3.4C1.6 1.7 3.3.9 5.1.9c2 0 3.5 1 3.5 2.6 0 1.4-1 2.1-2 2.8-.9.6-1.3 1.2-1.3 2.4" fill="none" stroke="#fff" stroke-width="3.4"/><rect x="3.6" y="9.4" width="2.8" height="3" fill="#fff"/><path d="M1.6 3.4C1.6 1.7 3.3.9 5.1.9c2 0 3.5 1 3.5 2.6 0 1.4-1 2.1-2 2.8-.9.6-1.3 1.2-1.3 2.4" fill="none" stroke="#e41e2b" stroke-width="1.8"/><rect x="4.3" y="10.1" width="1.7" height="1.8" fill="#e41e2b"/></svg>
<div class="t" style="left:521.99px;top:727px;font-size:15.4px;line-height:25px;color:#3c8dbc;transform:scaleX(0.9825);transform-origin:0 0;">6</div>
<div class="t" style="left:621.62px;top:727px;font-size:15.4px;line-height:25px;color:#343a40;">ident: 6</div>
<div class="t" style="left:1204.02px;top:727px;font-size:15.4px;line-height:25px;color:#343a40;transform:scaleX(1.0083);transform-origin:0 0;">person</div>
<div class="r" style="left:2149px;top:727px;width:58px;height:24px;background:#f8f9fa;border:1px solid #d9d9d9;border-radius:3px"></div>
<div class="r" style="left:2170px;top:727px;width:1px;height:24px;background:#d9d9d9"></div>
<div class="r" style="left:2191px;top:727px;width:1px;height:24px;background:#d9d9d9"></div>
<svg class="r" style="left:2154px;top:732px;" width="13" height="12" viewBox="0 0 12.5 12" preserveAspectRatio="none"><path d="M6.2 0v7.6M2.6 4.4l3.6 3.6 3.6-3.6" fill="none" stroke="#343a40" stroke-width="1.6"/><rect x="0" y="9" width="12.5" height="3" rx=".5" fill="#343a40"/><circle cx="10.8" cy="10.5" r=".6" fill="#f8f9fa"/></svg>
<svg class="r" style="left:2175px;top:732px;" width="13" height="13" viewBox="0 0 13 13" preserveAspectRatio="none"><path d="M0 3.5h10.5" stroke="#343a40" stroke-width="1.5"/><path d="M9.3 0.4L13 3.5 9.3 6.6z" fill="#343a40"/><path d="M13 9.5H2.5" stroke="#343a40" stroke-width="1.5"/><path d="M3.7 6.4L0 9.5l3.7 3.1z" fill="#343a40"/></svg>
<svg class="r" style="left:2196px;top:737px;" width="6" height="3" viewBox="0 0 5.6 2.8" preserveAspectRatio="none"><path d="M0 0h5.6L2.8 2.8z" fill="#343a40"/></svg>
<div class="r" style="left:420px;top:767px;width:1837px;height:55px;background:#f7f7f7;border-radius:0 0 4px 4px;box-shadow:0 1px 2px rgba(0,0,0,.18)"></div>
<div class="r" style="left:440px;top:779px;width:94px;height:31px;background:#3c8dbc;border-radius:4px"></div>
<svg class="r" style="left:449px;top:787px;" width="14" height="14" viewBox="0 0 14 14" preserveAspectRatio="none"><path d="M11.6 4.2A5.6 5.6 0 1 0 12.6 8.5" fill="none" stroke="#fff" stroke-width="2.2"/><path d="M13.6 .4v5.4H8.2z" fill="#fff"/></svg>
<div class="t" style="left:466.73px;top:784px;font-size:13.6px;line-height:22px;color:#fff;transform:scaleX(0.9314);transform-origin:0 0;">Reclassify</div>
<div class="r" style="left:542px;top:779px;width:31px;height:31px;background:#f8f9fa;border:1px solid #dcdcdc;border-radius:3px;"></div>
<div class="r" style="left:573px;top:779px;width:31px;height:31px;background:#f8f9fa;border:1px solid #dcdcdc;border-radius:3px;"></div>
<div class="r" style="left:605px;top:779px;width:32px;height:31px;background:#f8f9fa;border:1px solid #dcdcdc;border-radius:3px;"></div>
<div class="r" style="left:646px;top:779px;width:32px;height:31px;background:#f8f9fa;border:1px solid #dcdcdc;border-radius:3px;"></div>
<div class="r" style="left:678px;top:779px;width:27px;height:31px;background:#f8f9fa;border:1px solid #dcdcdc;border-radius:3px;"></div>
<svg class="r" style="left:550px;top:787px;" width="15" height="14" viewBox="0 0 15 14" preserveAspectRatio="none"><path d="M7.5 9V1.5M4.2 4.6L7.5 1.3l3.3 3.3" fill="none" stroke="#343a40" stroke-width="1.7"/><path d="M0 9.5h5.5v1.2h4V9.5H15v4.5H0z" fill="#343a40"/><circle cx="12.8" cy="11.8" r=".7" fill="#f8f9fa"/></svg>
<svg class="r" style="left:581px;top:787px;" width="15" height="14" viewBox="0 0 15 14" preserveAspectRatio="none"><path d="M7.5 .5v8M4.2 5.5l3.3 3.3 3.3-3.3" fill="none" stroke="#343a40" stroke-width="1.7"/><path d="M0 9.5h5.5l2 1.6 2-1.6H15v4.5H0z" fill="#343a40"/><circle cx="12.8" cy="11.8" r=".7" fill="#f8f9fa"/></svg>
<svg class="r" style="left:614px;top:787px;" width="20" height="18" viewBox="0 0 20 18" preserveAspectRatio="none"><path d="M6.8 1.4A6.9 6.9 0 1 0 13.6 9.4H6.8z" fill="#343a40"/><path d="M8.4 0A6.4 6.4 0 0 1 14.8 6.4H8.4z" fill="#343a40"/><rect x="8.4" y="6.9" width="6.4" height="1.6" fill="#b9bdc1"/><path d="M16.3 11v7M12.8 14.5h7" stroke="#1f9d1f" stroke-width="1.5"/></svg>
<svg class="r" style="left:655.5px;top:787px;" width="13.5" height="13.5" viewBox="0 0 13.5 13.5" preserveAspectRatio="none"><path d="M1.3 6.2A5.5 5.5 0 0 1 10.9 3.6" fill="none" stroke="#343a40" stroke-width="2.1"/><path d="M13.3 .4v5.6H7.7z" fill="#343a40"/><path d="M12.2 7.3A5.5 5.5 0 0 1 2.6 9.9" fill="none" stroke="#343a40" stroke-width="2.1"/><path d="M.2 13.1V7.5h5.6z" fill="#343a40"/></svg>
<svg class="r" style="left:686px;top:788px;" width="11" height="11" viewBox="0 0 11 11" preserveAspectRatio="none"><rect x="0" y="0" width="3.6" height="11" rx=".6" fill="#343a40"/><rect x="6.8" y="0" width="3.6" height="11" rx=".6" fill="#343a40"/></svg>
<div class="t" style="left:1418.59px;top:782px;font-size:15.8px;line-height:26px;color:#343a40;transform:scaleX(0.9210);transform-origin:0 0;">Rows per page</div>
<div class="r" style="left:1524px;top:779px;width:57px;height:31px;background:#fff;border:1px solid #ced4da;border-radius:4px"></div>
<div class="t" style="left:1532.68px;top:784px;font-size:13px;line-height:21px;color:#343a40;transform:scaleX(0.9869);transform-origin:0 0;">20</div>
<svg class="r" style="left:1567px;top:792px;" width="9" height="6" viewBox="0 0 9 6" preserveAspectRatio="none"><path d="M.7 .8L4.5 4.8 8.3 .8" fill="none" stroke="#343a40" stroke-width="1.4"/></svg>
<div class="t" style="left:1604.04px;top:784px;font-size:15px;line-height:24px;color:#343a40;transform:scaleX(1.0076);transform-origin:0 0;">Displaying 1 to 20, unknown number of matching results.</div>
<div class="r" style="left:2007px;top:779px;width:230px;height:31px;background:#fff;border:1px solid #dee2e6;border-radius:4px"></div>
<div class="r" style="left:2038px;top:779px;width:1px;height:31px;background:#dee2e6"></div>
<div class="r" style="left:2062px;top:779px;width:1px;height:31px;background:#dee2e6"></div>
<div class="r" style="left:2086px;top:779px;width:1px;height:31px;background:#dee2e6"></div>
<div class="r" style="left:2110px;top:779px;width:1px;height:31px;background:#dee2e6"></div>
<div class="r" style="left:2134px;top:779px;width:1px;height:31px;background:#dee2e6"></div>
<div class="r" style="left:2158px;top:779px;width:1px;height:31px;background:#dee2e6"></div>
<div class="r" style="left:2182px;top:779px;width:1px;height:31px;background:#dee2e6"></div>
<div class="r" style="left:2206px;top:779px;width:1px;height:31px;background:#dee2e6"></div>
<div class="r" style="left:2062px;top:779px;width:25px;height:31px;background:#3c8dbc"></div>
<div class="t" style="left:2016.62px;top:786px;font-size:11px;line-height:18px;color:#3c8dbc;">&lt;&lt;</div>
<div class="t" style="left:2047.31px;top:786px;font-size:11px;line-height:18px;color:#3c8dbc;">&lt;</div>
<div class="t" style="left:2070.69px;top:784px;font-size:13px;line-height:21px;color:#fff;">1</div>
<div class="t" style="left:2094.88px;top:784px;font-size:13px;line-height:21px;color:#3c8dbc;">2</div>
<div class="t" style="left:2118.94px;top:784px;font-size:13px;line-height:21px;color:#3c8dbc;">3</div>
<div class="t" style="left:2142.94px;top:784px;font-size:13px;line-height:21px;color:#3c8dbc;">4</div>
<div class="t" style="left:2166.88px;top:784px;font-size:13px;line-height:21px;color:#3c8dbc;">5</div>
<div class="t" style="left:2191.31px;top:786px;font-size:11px;line-height:18px;color:#3c8dbc;">&gt;</div>
<div class="t" style="left:2215.62px;top:786px;font-size:11px;line-height:18px;color:#3c8dbc;">&gt;&gt;</div>
<div class="r" style="left:420px;top:854px;width:1837px;height:159px;background:#fff;border-radius:4px;border-top:3px solid #001f3f;box-shadow:0 0 1px rgba(0,0,0,.125),0 1px 3px rgba(0,0,0,.2)"></div>
<div class="r" style="left:420px;top:902px;width:1837px;height:1px;background:#e3e3e3"></div>
<div class="t" style="left:439.47px;top:866px;font-size:17px;line-height:28px;color:#343a40;transform:scaleX(0.9780);transform-origin:0 0;">Synchronization tasks</div>
<div class="r" style="left:450px;top:923px;width:80px;height:60px;background:#f8f9fa;border:1px solid #dcdcdc;border-radius:3px;"></div>
<div class="t" style="left:467.39px;top:958px;font-size:11.6px;line-height:19px;color:#6c757d;transform:scaleX(1.0792);transform-origin:0 0;">Import</div>
<svg class="r" style="left:505px;top:966px;" width="6" height="3" viewBox="0 0 6 3" preserveAspectRatio="none"><path d="M0 0h6L3 3z" fill="#6c757d"/></svg>
<div class="r" style="left:526px;top:921px;width:13px;height:15px;background:#20c997;border-radius:3px"></div>
<div class="t" style="left:529.69px;top:921px;font-size:9.5px;line-height:16px;color:#fff;">1</div>
<div class="r" style="left:548px;top:923px;width:92px;height:60px;background:#f8f9fa;border:1px solid #dcdcdc;border-radius:3px;"></div>
<div class="t" style="left:553.27px;top:958px;font-size:11.6px;line-height:19px;color:#6c757d;transform:scaleX(1.0067);transform-origin:0 0;">Reconciliation</div>
<svg class="r" style="left:628.4px;top:966px;" width="6.0" height="3" viewBox="0 0 6 3" preserveAspectRatio="none"><path d="M0 0h6L3 3z" fill="#6c757d"/></svg>
<div class="r" style="left:636px;top:921px;width:13px;height:15px;background:#20c997;border-radius:3px"></div>
<div class="t" style="left:639.88px;top:921px;font-size:9.5px;line-height:16px;color:#fff;">0</div>
<div class="r" style="left:658px;top:923px;width:80px;height:60px;background:#f8f9fa;border:1px solid #dcdcdc;border-radius:3px;"></div>
<div class="t" style="left:670.03px;top:958px;font-size:11.6px;line-height:19px;color:#6c757d;transform:scaleX(0.9485);transform-origin:0 0;">Live sync</div>
<svg class="r" style="left:719.2px;top:966px;" width="6.0" height="3" viewBox="0 0 6 3" preserveAspectRatio="none"><path d="M0 0h6L3 3z" fill="#6c757d"/></svg>
<div class="r" style="left:734px;top:921px;width:13px;height:15px;background:#20c997;border-radius:3px"></div>
<div class="t" style="left:737.88px;top:921px;font-size:9.5px;line-height:16px;color:#fff;">0</div>
<div class="r" style="left:756px;top:923px;width:80px;height:60px;background:#f8f9fa;border:1px solid #dcdcdc;border-radius:3px;"></div>
<div class="t" style="left:763.76px;top:958px;font-size:11.6px;line-height:19px;color:#6c757d;transform:scaleX(1.0245);transform-origin:0 0;">Simulation</div>
<svg class="r" style="left:821.6px;top:966px;" width="6.0" height="3" viewBox="0 0 6 3" preserveAspectRatio="none"><path d="M0 0h6L3 3z" fill="#6c757d"/></svg>
<div class="r" style="left:832px;top:921px;width:13px;height:15px;background:#20c997;border-radius:3px"></div>
<div class="t" style="left:835.88px;top:921px;font-size:9.5px;line-height:16px;color:#fff;">0</div>
<svg class="r" style="left:478px;top:938px;" width="20" height="21" viewBox="0 0 20 21" preserveAspectRatio="none"><path d="M10 1.2v10.8M4.9 7.4L10 12.5l5.1-5.1" fill="none" stroke="#6c757d" stroke-width="2.5" stroke-linecap="round"/><path d="M1.2 14h4.8l4 3.4 4-3.4h4.8c.7 0 1.2.5 1.2 1.2v4.6c0 .7-.5 1.2-1.2 1.2H1.2C.5 21 0 20.5 0 19.8v-4.6C0 14.5.5 14 1.2 14z" fill="#6c757d"/><circle cx="16.7" cy="17.3" r="1" fill="#f8f9fa"/></svg>
<svg class="r" style="left:580px;top:939px;" width="25" height="19" viewBox="18 20 604 472" preserveAspectRatio="none"><path d="M579.8 267.7c56.5-56.5 56.5-148 0-204.5c-50-50-128.8-56.5-186.3-15.4l-1.6 1.1c-14.4 10.3-17.7 30.3-7.4 44.6s30.3 17.7 44.6 7.4l1.6-1.1c32.1-22.9 76-19.3 103.8 8.6c31.5 31.5 31.5 82.5 0 114L422.3 334.8c-31.5 31.5-82.5 31.5-114 0c-27.9-27.9-31.5-71.8-8.6-103.8l1.1-1.6c10.3-14.4 6.9-34.4-7.4-44.6s-34.4-6.9-44.6 7.4l-1.1 1.6C206.5 251.2 213 330 263 380c56.5 56.5 148 56.5 204.5 0L579.8 267.7zM60.2 244.3c-56.5 56.5-56.5 148 0 204.5c50 50 128.8 56.5 186.3 15.4l1.6-1.1c14.4-10.3 17.7-30.3 7.4-44.6s-30.3-17.7-44.6-7.4l-1.6 1.1c-32.1 22.9-76 19.3-103.8-8.6C74 372 74 321 105.5 289.5L217.7 177.2c31.5-31.5 82.5-31.5 114 0c27.9 27.9 31.5 71.8 8.6 103.9l-1.1 1.6c-10.3 14.4-6.9 34.4 7.4 44.6s34.4 6.9 44.6-7.4l1.1-1.6C433.5 260.8 427 182 377 132c-56.5-56.5-148-56.5-204.5 0L60.2 244.3z" fill="#6c757d"/></svg>
<svg class="r" style="left:686px;top:940px;" width="20" height="17" viewBox="0 0 20 17" preserveAspectRatio="none"><path d="M3 7.3A7 7 0 0 1 16 4.6" fill="none" stroke="#6c757d" stroke-width="2.8"/><path d="M19.3 0v7.2H12.1z" fill="#6c757d"/><path d="M17 9.7A7 7 0 0 1 4 12.4" fill="none" stroke="#6c757d" stroke-width="2.8"/><path d="M.7 17V9.8h7.2z" fill="#6c757d"/></svg>
<svg class="r" style="left:785px;top:938px;" width="18" height="21" viewBox="0 0 18 21" preserveAspectRatio="none"><rect x="3.8" y="0" width="10.4" height="2.2" rx=".8" fill="#6c757d"/><path d="M5.2 2h2.2v6.2L2.6 16.8c-.3.5.1 1.2.7 1.2h11.4c.6 0 1-.7.7-1.2L10.6 8.2V2h2.2v5.6l4.9 9.1c.9 1.8-.3 4.3-2.4 4.3H2.7C.6 21-.6 18.5.3 16.7l4.9-9.1z" fill="#6c757d"/><path d="M4.6 11.6h8.8l3.1 5.6c.5.9-.1 2.1-1.2 2.1H2.7c-1.1 0-1.7-1.2-1.2-2.1z" fill="#6c757d"/></svg>
<svg class="r" style="left:0;top:0" width="2284" height="1040" viewBox="0 0 2284 1040"><ellipse cx="485" cy="795.5" rx="67" ry="29.5" fill="none" stroke="#ec1c24" stroke-width="5"/><ellipse cx="662" cy="793.5" rx="24.5" ry="23" fill="none" stroke="#ec1c24" stroke-width="5"/></svg>
<div class="r" style="left:2282px;top:880px;width:2px;height:44px;background:#8bc34a;border-radius:2px 0 0 2px"></div>
</body></html>
